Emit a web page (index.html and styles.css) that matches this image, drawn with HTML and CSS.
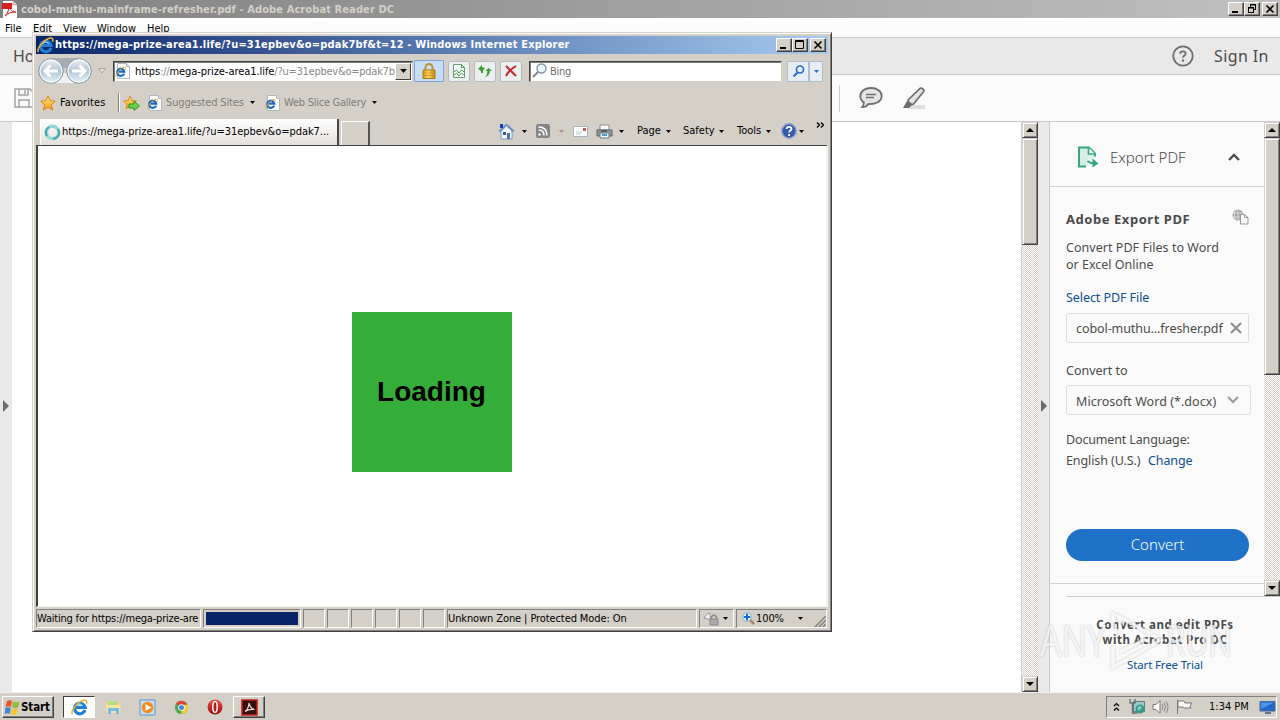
FILE: index.html
```html
<!DOCTYPE html>
<html lang="en">
<head>
<meta charset="utf-8">
<title>Desktop</title>
<link rel="stylesheet" href="styles.css">
</head>
<body>
<svg class="defs" width="0" height="0">
  <defs>
    <linearGradient id="gold" x1="0" y1="0" x2="0" y2="1"><stop offset="0" stop-color="#fff08a"/><stop offset="1" stop-color="#f09a10"/></linearGradient>
    <linearGradient id="orb" x1="0" y1="0" x2="0" y2="1"><stop offset="0" stop-color="#eef3f6"/><stop offset=".5" stop-color="#b3c4d2"/><stop offset="1" stop-color="#e4f7fb"/></linearGradient>
    <linearGradient id="lockg" x1="0" y1="0" x2="1" y2="0"><stop offset="0" stop-color="#d99412"/><stop offset=".45" stop-color="#ffdc62"/><stop offset="1" stop-color="#c98006"/></linearGradient>
    <linearGradient id="redg" x1="0" y1="0" x2="0" y2="1"><stop offset="0" stop-color="#ef5148"/><stop offset="1" stop-color="#9e0808"/></linearGradient>
    <symbol id="e" viewBox="0 0 16 16">
      <path d="M13.2 10.400A5 5 0 1 1 13.300 8H5" fill="none" stroke="#1f7fd4" stroke-width="3"/>
      <path d="M5 6.500a3.500 3.500 0 0 1 6 0" fill="none" stroke="#8fd0fa" stroke-width="1"/>
      <path d="M1.300 14.200C-.6 11.700 5 3.800 10.800 1.500c3.500-1.400 4.900.2 3.700 3.100" fill="none" stroke="#e9b52d" stroke-width="1.500"/>
    </symbol>
    <symbol id="page-e" viewBox="0 0 16 16">
      <path d="M2.500.5h9l3 3v12h-12z" fill="#fff" stroke="#aeb6bf"/><path d="M11.500.5v3h3" fill="#e4e8ec" stroke="#aeb6bf"/>
      <path d="M9.100 10.600A3.600 3.600 0 1 1 9.300 8.700H3.700" fill="none" stroke="#1a69c0" stroke-width="2.200"/><path d="M1 13.800C0 12 4 6.200 8 4.700c2-.7 2.800.2 2.300 1.700" fill="none" stroke="#dba526" stroke-width="1"/>
    </symbol>
    <symbol id="star" viewBox="0 0 16 16"><path d="M8 .8l2.100 4.900 5.200.5-4 3.500 1.300 5.300L8 12.200 3.400 15l1.300-5.300-4-3.500 5.200-.5z" fill="url(#gold)" stroke="#d98513"/></symbol>
    <symbol id="drop" viewBox="0 0 5 3"><path d="M0 0h5L2.500 3z" fill="currentColor"/></symbol>
    <symbol id="up" viewBox="0 0 16 16"><path d="M3 9h8L7 5z" fill="#000"/></symbol>
    <symbol id="down" viewBox="0 0 16 16"><path d="M3 5h8L7 9z" fill="#000"/></symbol>
  </defs>
</svg>

<main class="desktop">
  <section class="acrobat">
    <header class="a-title">
      <svg width="16" height="17" viewBox="0 0 16 17"><path d="M1 0h10l4 4v13H1z" fill="#fff"/><path d="M11 0v4h4" fill="#e6d4d4" stroke="#c99"/><path d="M0 2h10v6H0z" fill="#d5201c"/><path d="M3 15c3-3 4-7 4-10 1 4 3 6 7 6-4 0-8 1-11 4z" fill="none" stroke="#d5201c"/></svg>
      <span class="a-name">cobol-muthu-mainframe-refresher.pdf - Adobe Acrobat Reader DC</span>
      <div class="caps">
        <i class="cap"><svg width="14" height="12"><path d="M3 9h6" stroke="#000" stroke-width="2"/></svg></i>
        <i class="cap"><svg width="14" height="12"><path d="M5 1.500h6M5.500 1v3M10.500 1v5.500M8 6.500h3M3 4.500h6M3.500 4v6M8.500 4v6M3 9.500h6M3 5h6M5 2h6" fill="none" stroke="#000"/></svg></i>
        <i class="cap gap"><svg width="14" height="12"><path d="M3.500 2.500l7 7M10.500 2.500l-7 7" stroke="#000" stroke-width="1.600"/></svg></i>
      </div>
    </header>
    <nav class="a-menu"><span>File</span><span>Edit</span><span>View</span><span>Window</span><span>Help</span></nav>
    <div class="a-home"><span class="home">Home</span>
      <svg width="22" height="22" viewBox="0 0 22 22"><circle cx="11" cy="11" r="9.700" fill="none" stroke="#6e6e6e" stroke-width="1.800"/><path d="M8.200 8.700c.2-3.200 5.800-3 5.400.1-.2 1.700-2.600 1.700-2.600 4" fill="none" stroke="#6e6e6e" stroke-width="1.800"/><circle cx="11" cy="15.500" r="1.200" fill="#6e6e6e"/></svg>
      <span class="signin">Sign In</span></div>
    <div class="a-tools">
      <svg class="save" width="20" height="20" viewBox="0 0 20 20"><path d="M1 1h15l3 3v15H1zM5 1v6h9V1M5 19v-7h10v7M11 2v4" fill="none" stroke="#a4a4a4" stroke-width="1.500"/></svg>
      <i class="rule"></i>
      <svg width="24" height="22" viewBox="0 0 24 22"><path d="M12 1C6 1 1.300 4.300 1.300 9c0 3 1.500 5 3.500 6.300.2 2-.5 3.400-1.700 4.900 3 0 5-1.200 6.400-3.200C16.500 17.500 22.700 14.500 22.700 9 22.700 4.300 18 1 12 1z" fill="#e4e4e4" stroke="#6e6e6e" stroke-width="1.800"/><path d="M7 7.500h10M7 10.500h8" stroke="#6e6e6e" stroke-width="1.400"/></svg>
      <svg width="24" height="22" viewBox="0 0 24 22"><path d="M8 18h15v4H6z" fill="#dedede"/><path d="M6 13L17.500 1.800c1.500-1.500 5.500.5 4 3L11.500 17c-2 1-5-1-5.500-4z" fill="#e4e4e4" stroke="#6e6e6e" stroke-width="1.700"/><path d="M5 14l5 4-3 3H1z" fill="#6e6e6e"/></svg>
    </div>
    <div class="a-body">
      <div class="left-strip"><svg width="7" height="12"><path d="M0 0l6 6-6 6z" fill="#6b6b6b"/></svg></div>
      <div class="doc"></div>
      <div class="sbar"><svg class="sbtn"><use href="#up" width="16" height="16"/></svg><i class="thumb doc-thumb"></i><svg class="sbtn last"><use href="#down" width="16" height="16"/></svg></div>
      <div class="split"><svg width="7" height="12"><path d="M0 0l6 6-6 6z" fill="#6b6b6b"/></svg></div>
      <aside class="pane">
        <div class="pane-top">
          <div class="pane-main">
            <div class="ex-head">
              <svg width="22" height="22" viewBox="0 0 22 22"><path d="M9 20.500H2v-19h10l6 6v3" fill="#d9eee7" stroke="#35a585" stroke-width="2"/><path d="M11.500 1.500v6.500h6.500" fill="#fff" stroke="#35a585" stroke-width="1.700"/><path d="M11 17h4" stroke="#fafafa" stroke-width="7"/><path d="M10.500 15q3 2.500 6 2.500" fill="none" stroke="#35a585" stroke-width="2"/><path d="M15.500 12.500l6 5-6 4z" fill="#35a585"/></svg>
              <span>Export PDF</span>
              <svg width="12" height="8"><path d="M1 7l5-5 5 5" fill="none" stroke="#4b4b4b" stroke-width="2.300"/></svg>
            </div>
            <div class="ex-body">
              <div class="title-row"><b>Adobe Export PDF</b><svg width="17" height="16" viewBox="0 0 17 16"><circle cx="6" cy="6" r="5.500" fill="#a5a5a5"/><path d="M1 4h10M1 8h9M6 1v10M3.500 1.500c-1.500 3-1.500 6 0 9" stroke="#ededed" stroke-width=".7" fill="none"/><path d="M8.500 5.500h4l3.500 3v6.500H8.500z" fill="#fafafa" stroke="#999"/><path d="M12.500 5.500v3H16" fill="none" stroke="#999"/></svg></div>
              <p class="desc"><span class="d1">Convert PDF Files to Word</span><br><span class="d2">or Excel Online</span></p>
              <a class="select">Select PDF File</a>
              <div class="file"><span>cobol-muthu...fresher.pdf</span><svg width="12" height="12"><path d="M1 1l10 10M11 1L1 11" stroke="#8c8c8c" stroke-width="2"/></svg></div>
              <div class="to">Convert to</div>
              <div class="format"><span>Microsoft Word (*.docx)</span><svg width="12" height="8"><path d="M1 1l5 5 5-5" fill="none" stroke="#999" stroke-width="2"/></svg></div>
              <div class="lang">Document Language:</div>
              <div class="english"><span>English (U.S.)</span><a>Change</a></div>
              <div class="convert">Convert</div>
            </div>
          </div>
          <div class="sbar pane-bar"><svg class="sbtn"><use href="#up" width="16" height="16"/></svg><i class="thumb pane-thumb"></i><svg class="sbtn last"><use href="#down" width="16" height="16"/></svg></div>
        </div>
        <div class="promo"><b class="p1">Convert and edit PDFs</b><b class="p2">with Acrobat Pro DC</b><a>Start Free Trial</a></div>
      </aside>
    </div>
  </section>

  <footer class="taskbar">
    <div class="start"><svg width="17" height="17" viewBox="0 0 17 17"><path d="M3 2c2-1.200 4-1 5 0L7 8c-2-1-3.500-1-5.500 0z" fill="#e8562c"/><path d="M9 2.500c2 1 4 1 6.500 0L14 8.500c-2 .8-4 .8-6 0z" fill="#8cbf3b"/><path d="M1.300 9c2-1 3.500-1 5.500 0l-1 6c-1.500-1-3-1-5 0z" fill="#3f83d1"/><path d="M7.800 9.300c2 1 4 1 6 .2l-1.300 5.700c-2 1-4 1-5.700 0z" fill="#f8c62c"/></svg><b>Start</b></div>
    <div class="task active"><svg width="17" height="17"><use href="#e"/></svg></div>
    <div class="task"><svg width="17" height="17" viewBox="0 0 17 17"><path d="M1 3h5l1 1h8v10H1z" fill="#f3d66f"/><path d="M3 2h9v4H3z" fill="#b6db84"/><path d="M1 6h15l-1 8H2z" fill="#f8e69a"/><path d="M3 15V9h11v6h-3v-3H6v3z" fill="#72bce8"/></svg></div>
    <div class="task"><svg width="17" height="17" viewBox="0 0 17 17"><path d="M1 1h15v15H1z" fill="#c6dff3" stroke="#5c92ca"/><circle cx="8.500" cy="8.500" r="5.800" fill="#f28b1b"/><path d="M6.500 5l6 3.500-6 3.500z" fill="#fff"/></svg></div>
    <div class="task"><svg width="15" height="15" viewBox="0 0 16 16"><circle cx="8" cy="8" r="7" fill="#4aaa50"/><path d="M8 8L2 4C5-.5 12 0 14.500 5H8z" fill="#dc4737"/><path d="M8 8l3-3h4c1 5-2 10-7 10z" fill="#f5cf34"/><circle cx="8" cy="8" r="3.500" fill="#fff"/><circle cx="8" cy="8" r="2.700" fill="#4387ed"/></svg></div>
    <div class="task"><svg width="16" height="16" viewBox="0 0 16 16"><circle cx="8" cy="8" r="7.500" fill="url(#redg)"/><ellipse cx="8" cy="8" rx="2.200" ry="5.500" fill="#bc1c18" stroke="#fff" stroke-width="1.500"/></svg></div>
    <div class="task pressed"><svg width="17" height="17" viewBox="0 0 17 17"><path d="M1 1h15v15H1z" fill="#34100e" stroke="#c51d19" stroke-width="1.600"/><path d="M4 12.500C7 10 8 7 8 4c1 4 2.500 6 5.500 6.500C10 10 7 10.500 4 12.500z" fill="none" stroke="#f2dddd" stroke-width="1.100"/></svg></div>
    <div class="tray">
      <svg width="7" height="11"><path d="M1 4l2.500-2.500L6 4M1 8.500L3.500 6 6 8.500" fill="none" stroke="#000" stroke-width="1.200"/></svg>
      <svg width="17" height="16" viewBox="0 0 17 16"><path d="M4.500 2.500h11v10h-11z" fill="#9dcbc6" stroke="#687b7c"/><path d="M1 0v4h5V0M3.500 4v10h5" fill="none" stroke="#647071" stroke-width="1.300"/><circle cx="11" cy="10" r="4.500" fill="#38988b"/><path d="M8 9l3-2 2 1-3 4" fill="#8cd1d0"/></svg>
      <svg width="17" height="16" viewBox="0 0 17 16"><path d="M1 5.500h3l4-4v13l-4-4H1z" fill="#fafafa" stroke="#777"/><path d="M10 5q2 3 0 6M12 3.500q3 4.500 0 9M14 2q4 6 0 12" fill="none" stroke="#888"/></svg>
      <svg width="17" height="16" viewBox="0 0 17 16"><path d="M1.500 1v14M2 2h6l1 2h7l-2 3 1 2H8L7 8H2z" fill="#f7f7f7" stroke="#777"/></svg>
      <span>1:34 PM</span>
      <svg width="17" height="15" viewBox="0 0 17 15"><path d="M1 1.500h15V11H1z" fill="#2368ca" stroke="#486a96"/><path d="M2 2.500h13L2 9z" fill="#4d95e8"/><path d="M6 13h6" stroke="#65758a" stroke-width="2"/></svg>
    </div>
  </footer>

  <section class="ie">
    <header class="ie-title"><svg width="17" height="17"><use href="#e"/></svg><b>https://mega-prize-area1.life/?u=31epbev&amp;o=pdak7bf&amp;t=12 - Windows Internet Explorer</b>
      <div class="caps">
        <i class="cap"><svg width="14" height="12"><path d="M3 9h6" stroke="#000" stroke-width="2"/></svg></i>
        <i class="cap"><svg width="14" height="12"><path d="M2.500 1.500h8v8h-8zM2 2.500h9" fill="none" stroke="#000"/></svg></i>
        <i class="cap gap"><svg width="14" height="12"><path d="M3.500 2.500l7 7M10.500 2.500l-7 7" stroke="#000" stroke-width="1.600"/></svg></i>
      </div>
    </header>
    <div class="nav">
      <svg width="56" height="28" viewBox="0 0 56 28"><path d="M14 1h28v7q-14 6-28 0z" fill="#a8adb4"/><path d="M14 26h28v-7q-14-6-28 0z" fill="#eef0f1"/><g fill="url(#orb)" stroke="#8797a7"><circle cx="14" cy="14" r="12.300"/><circle cx="42" cy="14" r="12.300"/></g><g fill="none" stroke="#fff"><circle cx="14" cy="14" r="11"/><circle cx="42" cy="14" r="11"/><path d="M21 14H8M13.500 8.500L8 14l5.500 5.500M35 14h13M42.500 8.500L48 14l-5.500 5.500" stroke-width="3"/></g></svg>
      <svg class="hist" width="8" height="6"><path d="M.5.5h7L4 5z" fill="#e4e0da" stroke="#aaa69f"/></svg>
      <div class="address"><svg width="16" height="16"><use href="#page-e"/></svg><span>https<em>://</em>mega-prize-area1.life<em>/?u=31epbev&amp;o=pdak7b</em></span><i><svg width="7" height="4"><use href="#drop"/></svg></i></div>
      <div class="lock"><svg width="14" height="16" viewBox="0 0 14 16"><path d="M3.500 8V4.500a3.500 3.500 0 0 1 7 0V8" fill="none" stroke="#c3922b" stroke-width="2"/><path d="M1 7h12v8.500H1z" fill="url(#lockg)" stroke="#b47a10"/><path d="M1 10h12M1 12.500h12" stroke="#c98b19" stroke-width=".7"/></svg></div>
      <div class="nbtn"><svg width="12" height="14"><path d="M.5.5h8l3 3v10H.5z" fill="#fff" stroke="#689c70"/><path d="M8.500.5v3h3M1 8l2.500-2L6 9l2.500-3L11 8M1 11l2.500-2L6 12l2.500-3 2.500 2" fill="none" stroke="#35a146"/></svg></div>
      <div class="nbtn"><svg width="16" height="14"><path d="M1 5l4-4v2.500h2.500v2H6V9H4V7z" fill="#35a12c"/><path d="M15 7l-3.500-3L8.500 7h2q0 4-2.500 6 4.500-1 4.800-6z" fill="#35a12c"/></svg></div>
      <div class="nbtn"><svg width="12" height="12"><path d="M1 1l10 10M11 1Q4 5 1 11" fill="none" stroke="#c9252d" stroke-width="2"/></svg></div>
      <div class="search"><svg width="16" height="16"><circle cx="9.500" cy="5.500" r="4.500" fill="#edf7ff" stroke="#8295a8" stroke-width="1.400"/><path d="M6 9l-5 5" stroke="#858585" stroke-width="2"/></svg><span>Bing</span></div>
      <div class="go"><svg width="13" height="12"><circle cx="8" cy="4.500" r="3.500" fill="#e9f3ff" stroke="#2669c9" stroke-width="1.700"/><path d="M5.500 7.500l-4 4" stroke="#2669c9" stroke-width="2"/></svg></div>
      <div class="go go-drop"><svg width="5" height="3"><use href="#drop"/></svg></div>
    </div>
    <div class="favs">
      <svg width="16" height="16"><use href="#star"/></svg><span class="f1">Favorites</span><i class="fsep"></i>
      <svg width="17" height="16" viewBox="0 0 17 16"><use href="#star" width="14" height="15"/><path d="M6 9h5V6l5.500 5-5.500 4.500V13H6z" fill="#68d34e" stroke="#2f8f22"/></svg>
      <svg width="16" height="16"><use href="#page-e"/></svg><span class="dim f2">Suggested Sites</span><svg class="dr"><use href="#drop"/></svg>
      <svg width="16" height="16"><use href="#page-e"/></svg><span class="dim f3">Web Slice Gallery</span><svg class="dr"><use href="#drop"/></svg>
    </div>
    <div class="tabs">
      <div class="tab"><svg width="17" height="17"><circle cx="8.500" cy="8.500" r="6.200" fill="none" stroke="#95d8da" stroke-width="3.500"/><path d="M3 12a6.200 6.200 0 0 1 2-9M14 5a6.200 6.200 0 0 1-5 9.700" fill="none" stroke="#42a7ac" stroke-width="2"/></svg><span>https://mega-prize-area1.life/?u=31epbev&amp;o=pdak7...</span></div>
      <div class="newtab"></div>
      <div class="cmds">
        <svg width="17" height="17" viewBox="0 0 17 17"><path d="M3 8v8h11V8L8.500 3z" fill="#f6faff" stroke="#7894c0"/><path d="M1 8.500l7.500-7 7.500 7" fill="none" stroke="#608bc4" stroke-width="1.600"/><path d="M2 1h3v4H2z" fill="#1a3fb0"/><path d="M9 10h3v6H9z" fill="#4b70ae"/><path d="M5 9h3v3H5z" fill="#394e9d"/></svg><svg class="dr"><use href="#drop"/></svg>
        <svg width="14" height="14"><rect width="14" height="14" rx="2" fill="#858585"/><circle cx="3.500" cy="10.500" r="1.300" fill="#fff"/><path d="M2.500 6q5.500 0 5.500 5.500M2.500 3q8.500 0 8.500 8.500" fill="none" stroke="#fff" stroke-width="1.500"/></svg><svg class="dr gray"><use href="#drop"/></svg>
        <svg width="15" height="11"><path d="M.5.5h14v10H.5z" fill="#fff" stroke="#a6b3bd"/><path d="M3 6h6M3 8h5" stroke="#c3cad0"/><path d="M10 2h3v3h-3z" fill="#da594f"/></svg>
        <svg width="17" height="15"><path d="M4 1h9v5H4z" fill="#fff" stroke="#888"/><path d="M1 6h15v6H1z" fill="#8f969b" stroke="#5b6269"/><path d="M4 9h9v5H4z" fill="#e8f6fc" stroke="#6c7880"/><path d="M5 7h6" stroke="#333"/><path d="M6 11h5" stroke="#44a2cb" stroke-width="2"/></svg><svg class="dr"><use href="#drop"/></svg>
        <span>Page</span><svg class="dr"><use href="#drop"/></svg><span>Safety</span><svg class="dr"><use href="#drop"/></svg><span>Tools</span><svg class="dr"><use href="#drop"/></svg>
        <svg width="16" height="16"><circle cx="8" cy="8" r="7.200" fill="#3159ae" stroke="#909fc4" stroke-width="1.500"/><path d="M5.500 6c.3-3 5.300-2.700 5 .1-.2 1.500-2.300 1.500-2.300 3.400M8.100 11v2" fill="none" stroke="#fff" stroke-width="1.800"/></svg><svg class="dr"><use href="#drop"/></svg>
        <svg class="more" width="8" height="6"><path d="M1 .5L3.500 3 1 5.500M5 .5L7.500 3 5 5.500" fill="none" stroke="#000" stroke-width="1.400"/></svg>
      </div>
    </div>
    <div class="view"><div class="loading">Loading</div></div>
    <div class="status">
      <div class="well wait"><span>Waiting for https://mega-prize-are</span></div><div class="well prog"><i></i></div>
      <div class="well"></div><div class="well"></div><div class="well"></div><div class="well"></div><div class="well"></div><div class="well"></div>
      <div class="well zone"><span>Unknown Zone | Protected Mode: On</span></div>
      <div class="well prot"><svg width="17" height="15"><path d="M1 7q3-5 6-5v7q-3-2-6-2z" fill="#f2f2f2" stroke="#999"/><path d="M8.500 8V6q2.500-4 5 0v2" fill="none" stroke="#8b8b8b" stroke-width="1.500"/><path d="M7 8h8v6H7z" fill="#aaa" stroke="#888"/></svg><svg class="dr"><use href="#drop"/></svg></div>
      <div class="well zoom"><svg width="13" height="13"><path d="M7 7l5 5" stroke="#a38c70" stroke-width="2.500"/><circle cx="5" cy="5" r="4.300" fill="#eaf5ff" stroke="#83aed7"/><path d="M5 1.800v6.400M1.800 5h6.400" stroke="#1569bd" stroke-width="2"/></svg><span>100%</span><svg class="dr"><use href="#drop"/></svg>
      <svg class="grip" width="13" height="13"><path d="M1 13L13 1M5 13l8-8M9 13l4-4" stroke="#858078" stroke-width="1.500"/></svg></div>
    </div>
  </section>

  <svg class="watermark" width="204" height="70" viewBox="0 0 204 70">
    <g class="wm-edge">
      <text x="4" y="49" textLength="66" lengthAdjust="spacingAndGlyphs">ANY</text>
      <text x="130" y="49" textLength="66" lengthAdjust="spacingAndGlyphs">RUN</text>
      <path d="M77 23V7l7 4M77 40v20l48-27-41-23v18M84 45l26-13"/>
    </g>
    <path class="wm-face" d="M77 23V7l7 4M77 40v20l48-27-41-23v18M84 45l26-13"/>
  </svg>
</main>
</body>
</html>
```
FILE: styles.css
```css
* { box-sizing: border-box; }
body { margin: 0; overflow: hidden; font: 11px/14px "DejaVu Sans Condensed", "DejaVu Sans", sans-serif; font-stretch: condensed; color: #000; }
svg { display: block; flex: none; }
.defs { position: absolute; }
span, b, a { white-space: nowrap; }
i, em { font-style: normal; }
.desktop { position: relative; width: 1280px; height: 720px; overflow: hidden; display: flex; flex-direction: column; }

/* Acrobat Reader window */
.acrobat { height: 692px; display: flex; flex-direction: column; background: #fafafa; }
.a-title { height: 18px; display: flex; align-items: center; padding: 0 2px 0 2px; background: linear-gradient(90deg, #808080, #c0c0c0); color: #d4d0c8; font-weight: bold; }
.a-name { margin: 1px 0 0 3px; letter-spacing: .1px; }
.caps { display: flex; margin-left: auto; }
.cap { width: 16px; height: 14px; background: #d4d0c8; border: 1px solid; border-color: #fff #404040 #404040 #fff; box-shadow: inset -1px -1px #808080; }
.cap.gap { margin-left: 2px; }
.a-menu { height: 20px; display: grid; grid-template-columns: 28px 30px 34px 50px 30px; align-items: center; padding: 2px 0 0 5px; background: linear-gradient(#fff, #fafafa); border-bottom: 1px solid #c8c8c8; }
.a-home { height: 37px; display: flex; align-items: center; padding: 0 11px 0 13px; background: #e9e9e9; border-bottom: 1px solid #c8c8c8; font: 16px "Noto Sans", sans-serif; color: #4b4b4b; }
.a-home svg { margin-left: auto; margin-right: 20px; }
.signin { width: 55px; letter-spacing: .4px; }
.a-tools { height: 47px; display: grid; grid-template-columns: 825px 20px 43px 24px; align-items: center; padding-left: 14px; border-bottom: 1px solid #c8c8c8; }
.rule { width: 1px; height: 27px; background: #ccc; }
.a-body { flex: 1; display: flex; min-height: 0; }
.left-strip { width: 12px; background: #e9e9e9; padding: 278px 0 0 3px; }
.doc { flex: 1; background: #fff; border-right: 1px solid #d0d0d0; }
.sbar { width: 16px; display: flex; flex-direction: column; background: repeating-conic-gradient(#d4d0c8 0 25%, #fff 0 50%) 0 0 / 2px 2px; }
.sbtn, .thumb { width: 16px; height: 16px; background: #d4d0c8; border: 1px solid; border-color: #d4d0c8 #404040 #404040 #d4d0c8; box-shadow: inset 1px 1px #fff, inset -1px -1px #808080; }
.sbtn.last { margin-top: auto; }
.doc-thumb { height: 107px; }
.pane-thumb { height: 237px; }
.split { width: 12px; background: #e9e9e9; border-right: 1px solid #c8c8c8; padding: 278px 0 0 3px; }
.pane { width: 230px; display: flex; flex-direction: column; font: 12.5px/17px "Noto Sans", sans-serif; color: #4b4b4b; }
.pane a { color: #0d4f91; }
.pane-top { height: 474px; display: flex; }
.pane-main { width: 214px; height: 462px; border-bottom: 1px solid #d0d0d0; }
.ex-head { height: 65px; display: grid; grid-template-columns: 33px 118px 12px; align-items: center; padding: 6px 0 0 27px; border-bottom: 1px solid #d0d0d0; font-size: 15px; font-weight: 300; }
.ex-body { padding: 24px 15px 0 16px; display: flex; flex-direction: column; }
.title-row { display: flex; justify-content: space-between; font-size: 13px; letter-spacing: .55px; }
.title-row svg { margin-top: -2px; }
.desc { margin: 11px 0 16px; }
.d1 { letter-spacing: .04px; }
.select { letter-spacing: -.07px; }
.file { width: 183px; height: 30px; margin-top: 7px; padding: 0 6px 0 9px; display: flex; align-items: center; justify-content: space-between; border: 1px solid #dcdcdc; border-radius: 3px; letter-spacing: -.08px; }
.to { margin-top: 19px; }
.format { width: 185px; height: 30px; margin-top: 6px; padding: 0 11px 0 9px; display: flex; align-items: center; justify-content: space-between; border: 1px solid #dcdcdc; border-radius: 3px; }
.format span { padding-top: 2px; letter-spacing: .05px; }
.lang { margin-top: 16px; letter-spacing: -.15px; }
.english { margin-top: 4px; display: grid; grid-template-columns: 82px 60px; letter-spacing: -.1px; }
.convert { width: 183px; height: 32px; margin-top: 60px; border-radius: 16px; background: #1f72c8; color: #fff; font-size: 15px; font-weight: 300; line-height: 31px; text-align: center; }
.promo { margin-left: 16px; border-top: 1px solid #c8c8c8; padding: 20px 16px 0 0; display: flex; flex-direction: column; align-items: center; font-size: 11.5px; line-height: 15px; }
.promo b { letter-spacing: .52px; }
.promo a { margin-top: 10px; letter-spacing: -.15px; }

/* Taskbar */
.taskbar { height: 28px; border-top: 1px solid #f4f2ee; background: #d4d0c8; display: flex; align-items: center; padding: 1px 0 0 2px; }
.start { width: 52px; height: 22px; display: flex; align-items: center; border: 1px solid; border-color: #fff #404040 #404040 #fff; box-shadow: inset -1px -1px #808080; padding-left: 1px; font-size: 11.5px; letter-spacing: -.1px; margin-right: 9px; }
.task { width: 32px; height: 22px; margin-right: 2px; display: flex; align-items: center; justify-content: center; }
.task.active { background: #fff; border: 1px solid; border-color: #404040 #fff #fff #404040; }
.task.pressed { border: 1px solid; border-color: #fff #404040 #404040 #fff; box-shadow: inset -1px -1px #808080; }
.tray { width: 171px; height: 22px; margin-left: auto; margin-right: 3px; display: grid; grid-template-columns: 16px 23px 24px 33px 50px 17px; align-items: center; padding-left: 6px; border: 1px solid; border-color: #808080 #fff #fff #808080; }

/* Internet Explorer window */
.ie { position: absolute; left: 32px; top: 32px; width: 800px; height: 600px; padding: 3px; display: flex; flex-direction: column; background: #d4d0c8; border: 1px solid; border-color: #d4d0c8 #404040 #404040 #d4d0c8; box-shadow: inset 1px 1px #fff, inset -1px -1px #808080; }
.ie-title { height: 18px; display: flex; align-items: center; padding: 0 2px 0 1px; color: #fff; background: linear-gradient(90deg, #0a246a, #a6caf0); }
.ie-title b { margin-left: 1px; letter-spacing: .19px; }
.nav { height: 34px; display: grid; grid-template-columns: 60px 16px 301px 34px 26px 26px 29px 258px 22px 15px; align-items: center; padding-left: 1px; }
.hist { margin-left: 1px; }
.address { width: 300px; height: 21px; display: flex; align-items: center; background: #fff; border: 1px solid; border-color: #404040 #d4d0c8 #d4d0c8 #404040; box-shadow: inset 1px 1px #808080; padding: 1px; }
.address span { width: 261px; margin: 2px 0 0 4px; letter-spacing: -.06px; }
.address em { color: #888; letter-spacing: -.25px; }
.address i { flex: none; width: 16px; height: 17px; margin-left: auto; display: flex; align-items: center; justify-content: center; background: #d4d0c8; border: 1px solid; border-color: #fff #404040 #404040 #fff; }
.lock { width: 30px; height: 22px; display: flex; align-items: center; justify-content: center; background: #c6ddfb; border: 1px solid #7ea6d9; }
.nbtn { width: 22px; height: 21px; display: flex; align-items: center; justify-content: center; background: #eceff0; border: 1px solid #b5bac0; border-radius: 2px; }
.search { width: 253px; height: 21px; display: flex; align-items: center; padding-left: 2px; background: #fff; border: 1px solid; border-color: #404040 #d4d0c8 #d4d0c8 #404040; box-shadow: inset 1px 1px #808080; color: #6d6d6d; }
.search span { margin: 2px 0 0 2px; letter-spacing: -.3px; }
.go { width: 22px; height: 21px; display: flex; align-items: center; justify-content: center; background: #e6edf5; border: 1px solid #aebdcd; color: #2669c9; }
.go-drop { width: 14px; }
.favs { height: 29px; display: grid; grid-template-columns: 20px 58px 5px 24px 19px 84px 15px 19px 88px 5px; align-items: center; padding-left: 4px; }
.f1 { letter-spacing: .1px; }
.f2 { letter-spacing: -.15px; }
.f3 { letter-spacing: -.25px; }
.fsep { width: 1px; height: 19px; background: #808080; box-shadow: 1px 0 #fff; }
.dim { color: #7f7c77; }
.dr { width: 5px; height: 3px; }
.dr.gray { color: #99958f; }
.tabs { height: 28px; display: flex; align-items: flex-end; padding-left: 4px; }
.tab { width: 299px; height: 26px; display: flex; align-items: center; padding: 0 0 0 3px; background: linear-gradient(#fff, #e4e1dc); border-right: 2px solid #484848; border-left: 1px solid #fff; }
.tab span { margin-left: 1px; letter-spacing: -.06px; }
.newtab { width: 29px; height: 24px; margin-left: 2px; border-top: 1px solid #fff; border-left: 1px solid #fff; border-right: 2px solid #555; }
.cmds { flex: 1; height: 28px; margin-left: 128px; display: grid; grid-template-columns: 24px 14px 23px 14px 23px 23px 18px 29px 17px 36px 18px 29px 15px 18px 17px 8px; align-items: center; }
.more { margin-top: -13px; }
.view { height: 462px; background: #fff; border: 1px solid; border-color: #404040 #f5f4f1 #f5f4f1 #404040; border-left-width: 2px; border-right-width: 2px; display: flex; align-items: center; justify-content: center; padding-top: 31px; }
.loading { width: 160px; height: 160px; background: #34ae39; font: bold 28px/160px "Liberation Sans", Arial, sans-serif; padding-right: 1px; text-align: center; }
.status { flex: 1; display: grid; grid-template-columns: 167px 100px repeat(6, 24px) 252px 37px 91px; padding-top: 2px; }
.well { height: 19px; margin-right: 2px; border: 1px solid; border-color: #808080 #fff #fff #808080; display: flex; align-items: center; overflow: hidden; }
.well span { padding-top: 1px; }
.wait span { letter-spacing: -.2px; }
.prog i { width: 92px; height: 13px; margin-left: 2px; background: #0a246a; }
.zone span { letter-spacing: -.1px; }
.prot { padding-left: 3px; gap: 3px; }
.zoom { padding-left: 5px; margin-right: 0; }
.zoom span { width: 45px; margin-left: 1px; letter-spacing: -.1px; }
.zoom .grip { margin-left: 10px; margin-top: 5px; }

/* Recorder watermark floating over the desktop */
.watermark { position: absolute; left: 1036px; top: 607px; font: 43px "Open Sans", sans-serif; }
.wm-edge { fill: rgba(255, 255, 255, .72); stroke: none; filter: drop-shadow(0 0 1px rgba(110, 110, 110, .5)); }
.wm-edge path, .wm-face { fill: none; stroke: rgba(255, 255, 255, .6); stroke-width: 4; }
.wm-face { stroke-width: 2; }
```
